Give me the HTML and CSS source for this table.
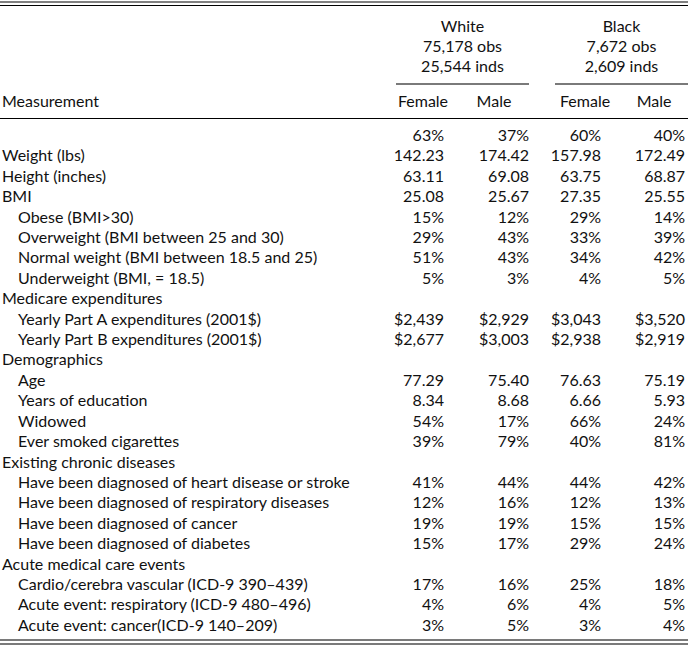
FILE: index.html
```html
<!DOCTYPE html>
<html lang="en">
<head>
<meta charset="utf-8">
<title>Measurements by race and sex</title>
<link rel="stylesheet" href="styles.css">
</head>
<body>
<div class="page">
  <div class="rule-gray-top"></div>
  <table class="stats">
    <colgroup>
      <col class="col-label">
      <col class="col-wf">
      <col class="col-wm">
      <col class="col-bf">
      <col class="col-bm">
    </colgroup>
    <thead>
      <tr class="group-row">
        <th class="blank"></th>
        <th colspan="2" class="group group-white"><div class="group-text">White<br>75,178 obs<br>25,544 inds</div><div class="group-rule"></div></th>
        <th colspan="2" class="group group-black"><div class="group-text">Black<br>7,672 obs<br>2,609 inds</div><div class="group-rule"></div></th>
      </tr>
      <tr class="sub-row">
        <th class="label-head">Measurement</th>
        <th class="h-wf">Female</th>
        <th class="h-wm">Male</th>
        <th class="h-bf">Female</th>
        <th class="h-bm">Male</th>
      </tr>
    </thead>
    <tbody>
      <tr class="first"><td></td><td>63%</td><td>37%</td><td>60%</td><td>40%</td></tr>
      <tr><td>Weight (lbs)</td><td>142.23</td><td>174.42</td><td>157.98</td><td>172.49</td></tr>
      <tr><td>Height (inches)</td><td>63.11</td><td>69.08</td><td>63.75</td><td>68.87</td></tr>
      <tr><td>BMI</td><td>25.08</td><td>25.67</td><td>27.35</td><td>25.55</td></tr>
      <tr><td class="sub">Obese (BMI&gt;30)</td><td>15%</td><td>12%</td><td>29%</td><td>14%</td></tr>
      <tr><td class="sub">Overweight (BMI between 25 and 30)</td><td>29%</td><td>43%</td><td>33%</td><td>39%</td></tr>
      <tr><td class="sub">Normal weight (BMI between 18.5 and 25)</td><td>51%</td><td>43%</td><td>34%</td><td>42%</td></tr>
      <tr><td class="sub">Underweight (BMI, = 18.5)</td><td>5%</td><td>3%</td><td>4%</td><td>5%</td></tr>
      <tr><td>Medicare expenditures</td><td></td><td></td><td></td><td></td></tr>
      <tr><td class="sub">Yearly Part A expenditures (2001$)</td><td>$2,439</td><td>$2,929</td><td>$3,043</td><td>$3,520</td></tr>
      <tr><td class="sub">Yearly Part B expenditures (2001$)</td><td>$2,677</td><td>$3,003</td><td>$2,938</td><td>$2,919</td></tr>
      <tr><td>Demographics</td><td></td><td></td><td></td><td></td></tr>
      <tr><td class="sub">Age</td><td>77.29</td><td>75.40</td><td>76.63</td><td>75.19</td></tr>
      <tr><td class="sub">Years of education</td><td>8.34</td><td>8.68</td><td>6.66</td><td>5.93</td></tr>
      <tr><td class="sub">Widowed</td><td>54%</td><td>17%</td><td>66%</td><td>24%</td></tr>
      <tr><td class="sub">Ever smoked cigarettes</td><td>39%</td><td>79%</td><td>40%</td><td>81%</td></tr>
      <tr><td>Existing chronic diseases</td><td></td><td></td><td></td><td></td></tr>
      <tr><td class="sub">Have been diagnosed of heart disease or stroke</td><td>41%</td><td>44%</td><td>44%</td><td>42%</td></tr>
      <tr><td class="sub">Have been diagnosed of respiratory diseases</td><td>12%</td><td>16%</td><td>12%</td><td>13%</td></tr>
      <tr><td class="sub">Have been diagnosed of cancer</td><td>19%</td><td>19%</td><td>15%</td><td>15%</td></tr>
      <tr><td class="sub">Have been diagnosed of diabetes</td><td>15%</td><td>17%</td><td>29%</td><td>24%</td></tr>
      <tr><td>Acute medical care events</td><td></td><td></td><td></td><td></td></tr>
      <tr><td class="sub">Cardio/cerebra vascular (ICD-9 390–439)</td><td>17%</td><td>16%</td><td>25%</td><td>18%</td></tr>
      <tr><td class="sub">Acute event: respiratory (ICD-9 480–496)</td><td>4%</td><td>6%</td><td>4%</td><td>5%</td></tr>
      <tr class="last"><td class="sub">Acute event: cancer(ICD-9 140–209)</td><td>3%</td><td>5%</td><td>3%</td><td>4%</td></tr>
    </tbody>
  </table>
  <div class="rule-gray-bottom"></div>
  <div class="rule-gray-bottom second"></div>
</div>
</body>
</html>
```

FILE: styles.css
```css
html, body {
  margin: 0;
  padding: 0;
  background: #ffffff;
}

.page {
  width: 688px;
  font-family: "Lato", "Open Sans", "DejaVu Sans", sans-serif;
  font-size: 16px;
  color: #111111;
}

.rule-gray-top {
  margin-top: 1px;
  height: 0;
  border-top: 2px solid #808080;
  margin-bottom: 2px;
}

.stats {
  width: 688px;
  table-layout: fixed;
  border-collapse: collapse;
  border-top: 1px solid #000000;
}

.col-label { width: 388px; }
.col-wf { width: 70px; }
.col-wm { width: 84px; }
.col-bf { width: 66px; }
.col-bm { width: 80px; }

th {
  font-weight: normal;
  padding: 0;
  line-height: 20px;
}

.group-row th {
  padding-top: 10px;
  padding-bottom: 6px;
  vertical-align: top;
  text-align: center;
}

.group-text {
  line-height: 20px;
}

.group-rule {
  margin-top: 7px;
  height: 0;
  border-top: 2px solid #7a7a7a;
}

.group-white .group-text,
.group-white .group-rule {
  margin-left: 8px;
  margin-right: 13px;
}

.group-black .group-text,
.group-black .group-rule {
  margin-left: 13px;
  margin-right: 0;
}

.sub-row th {
  padding-bottom: 7px;
  text-align: center;
}

.sub-row {
  border-bottom: 1px solid #000000;
}

.sub-row .label-head {
  text-align: left;
  padding-left: 2px;
}

.h-wm { padding-right: 12px !important; }
.h-bf { padding-left: 18px !important; }
.h-bm { padding-left: 12px !important; }

td {
  padding: 0;
  line-height: 20.4px;
  height: 20.4px;
  text-align: right;
  white-space: nowrap;
}

td:first-child {
  text-align: left;
  padding-left: 2px;
}

td.sub {
  padding-left: 18px;
}

td:nth-child(2) { padding-right: 14px; }
td:nth-child(3) { padding-right: 13px; }
td:nth-child(4) { padding-right: 7px; }
td:nth-child(5) { padding-right: 3px; }

tr.first td { padding-top: 6px; }
tr.last td { padding-bottom: 4px; }

.rule-gray-bottom {
  height: 0;
  border-top: 2px solid #7a7a7a;
}

.rule-gray-bottom.second {
  margin-top: 2px;
}
```
